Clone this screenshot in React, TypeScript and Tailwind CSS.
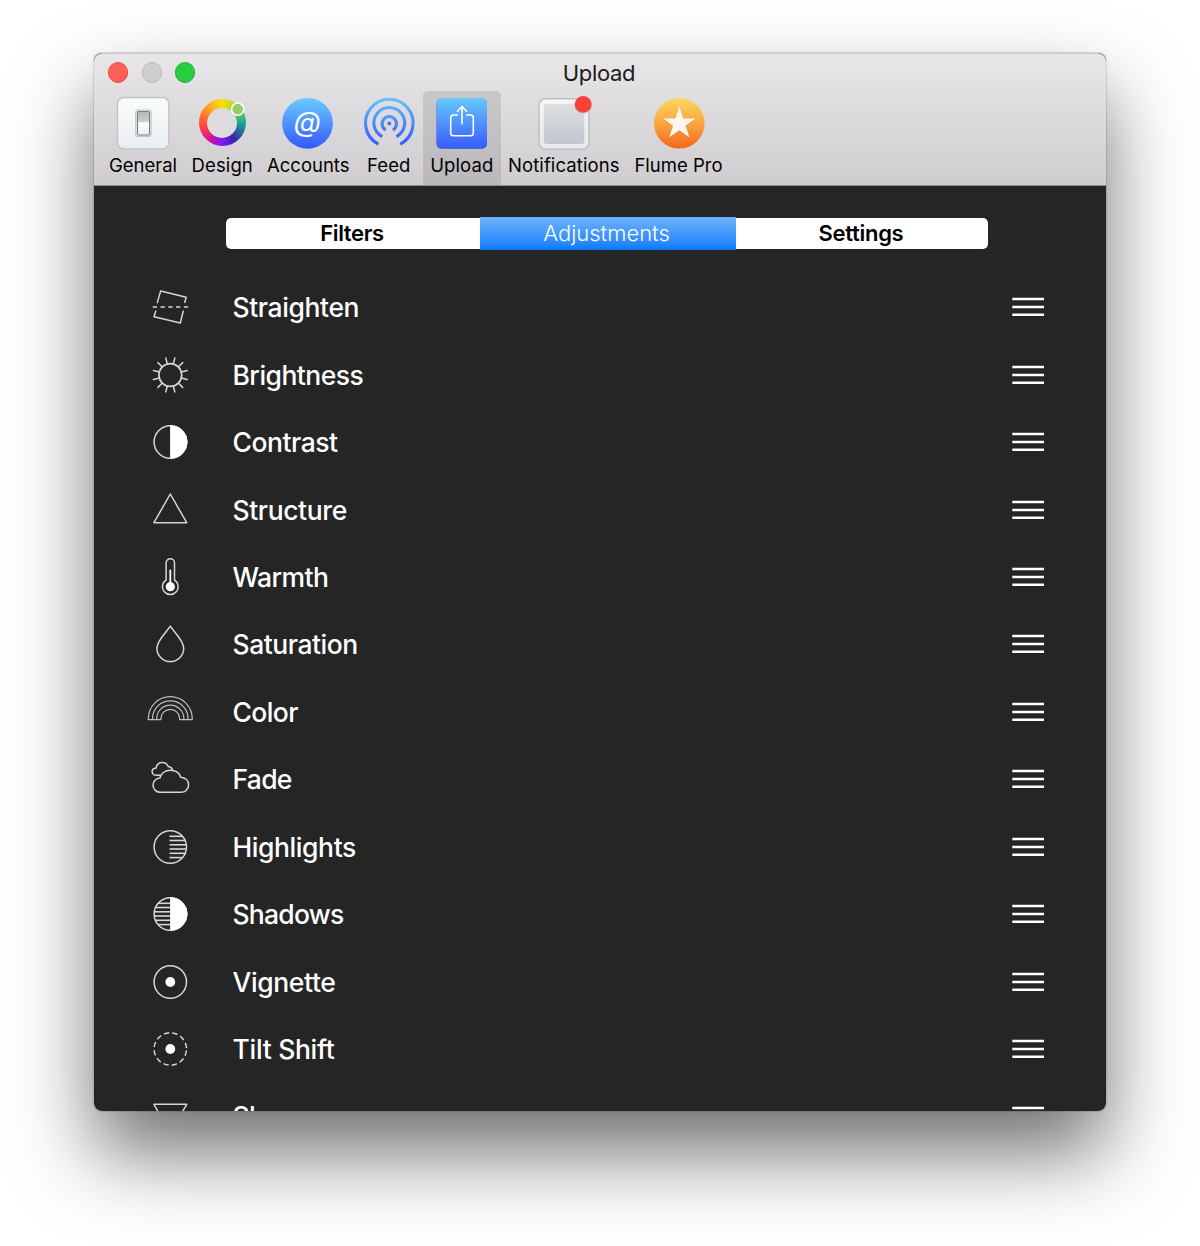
import type { ReactNode } from "react";

const line = { fill: "none", stroke: "#d6d6d6", strokeWidth: 1.5, strokeLinecap: "round", strokeLinejoin: "round" } as const;

const stripes = [13.3, 17.5, 21.8, 26, 30.3, 34.6];

function chord(y: number) {
  return Math.sqrt(16.4 * 16.4 - (y - 24) * (y - 24));
}

const adjustments: { name: string; label: string; art: ReactNode }[] = [
  {
    name: "Straighten",
    label: "tracking-[-0.4px]",
    art: (
      <>
        <path d="M11.3 19.6 14.7 7.9 40.2 14.3 38.8 19.3M9.7 28.3 8 33.8 34.3 40 37.2 28.3" />
        <path d="M6.7 24H42.3" strokeDasharray="4.3 3.5" strokeLinecap="butt" strokeWidth="1.7" />
      </>
    ),
  },
  {
    name: "Brightness",
    label: "tracking-[-0.55px]",
    art: (
      <>
        <circle cx="24.3" cy="24" r="11.4" strokeWidth="1.7" />
        {[15, 45, 75, 105, 135, 165, 195, 225, 255, 285, 315, 345].map((a) => (
          <path key={a} d="M35.7 24H41.8" transform={`rotate(${a} 24.3 24)`} />
        ))}
      </>
    ),
  },
  {
    name: "Contrast",
    label: "tracking-[-0.48px]",
    art: (
      <>
        <circle cx="24.3" cy="24" r="16.2" />
        <path d="M25 7.8a16.2 16.2 0 0 1 0 32.4Z" fill="#fff" stroke="#fff" strokeWidth="1" />
      </>
    ),
  },
  { name: "Structure", label: "tracking-[-0.4px]", art: <path d="M24.3 8 40.7 36.7H7.9Z" /> },
  {
    name: "Warmth",
    label: "tracking-[-0.6px]",
    art: (
      <>
        <path d="M20.1 27V10a4.2 4.2 0 0 1 8.4 0V27a7.9 7.9 0 1 1-8.4 0Z" />
        <path d="M24.3 17.5V33" stroke="#fff" strokeWidth="1.8" />
        <circle cx="24.3" cy="33.7" r="4.6" fill="#fff" stroke="none" />
      </>
    ),
  },
  {
    name: "Saturation",
    label: "tracking-[-0.47px]",
    art: <path d="M24.3 6.2C21 11.5 10.9 20.3 10.9 28.2a13.4 13.4 0 0 0 26.8 0C37.7 20.3 27.6 11.5 24.3 6.2Z" />,
  },
  {
    name: "Color",
    label: "tracking-[-0.6px]",
    art: (
      <g strokeWidth="1.2" stroke="#bdbdbd">
        {[22, 17.8, 13.6, 9.4].map((r) => (
          <path key={r} d={`M${24.3 - r} 31.2V30.7a${r} ${r} 0 0 1 ${2 * r} 0V31.2`} />
        ))}
        <path d="M2.3 31.7H14.9M33.7 31.7H46.3" />
      </g>
    ),
  },
  {
    name: "Fade",
    label: "tracking-[-0.7px]",
    art: (
      <>
        <path d="M14.4 37.3a7.2 7.2 0 0 1-.4-14.4C14.6 18.6 19 15.3 24.3 15.3c5 0 8.900 2.6 10.4 6.9 4.7.4 7.9 3.4 7.9 7.6 0 4.3-3.3 7.5-7.6 7.500Z" />
        <path d="M13.8 20.3H10.4c-2.600 0-4.300-1.600-4.300-3.700 0-2.200 1.600-3.500 4-3.700 .6-3.200 3-5.400 6.200-5.400 3.100 0 5 1.600 5.900 4.100 2 .1 3.500 1.200 4.200 3" />
      </>
    ),
  },
  {
    name: "Highlights",
    label: "tracking-[-0.42px]",
    art: (
      <>
        <circle cx="24.3" cy="24" r="16.2" />
        {stripes.map((y) => (
          <path key={y} d={`M23.5 ${y}H${24.3 + chord(y)}`} strokeLinecap="butt" strokeWidth="1.6" />
        ))}
      </>
    ),
  },
  {
    name: "Shadows",
    label: "tracking-[-0.75px]",
    art: (
      <>
        <circle cx="24.3" cy="24" r="16.2" />
        {stripes.map((y) => (
          <path key={y} d={`M${24.3 - chord(y)} ${y}H24.3`} strokeLinecap="butt" strokeWidth="1.6" />
        ))}
        <path d="M25 7.8a16.2 16.2 0 0 1 0 32.4Z" fill="#fff" stroke="#fff" strokeWidth="1" />
      </>
    ),
  },
  {
    name: "Vignette",
    label: "tracking-[-0.38px]",
    art: (
      <>
        <circle cx="24.3" cy="24" r="16.2" />
        <circle cx="24.3" cy="24" r="4.9" fill="#fff" stroke="none" />
      </>
    ),
  },
  {
    name: "Tilt Shift",
    label: "tracking-[-0.3px]",
    art: (
      <>
        <circle cx="24.3" cy="24" r="16.2" strokeDasharray="5.3 3.18" strokeDashoffset="-1.6" strokeLinecap="butt" />
        <circle cx="24.3" cy="24" r="4.9" fill="#fff" stroke="none" />
      </>
    ),
  },
  { name: "Sharpen", label: "tracking-[-0.5px]", art: <path d="M7.9 12.3H40.7L24.3 41Z" /> },
];

function GeneralIcon() {
  return (
    <>
      <defs>
        <linearGradient id="plate" x2="0" y2="1">
          <stop stopColor="#f9fcfc" />
          <stop offset="1" stopColor="#e9eef1" />
        </linearGradient>
        <linearGradient id="rocker" x2="0" y2="1">
          <stop stopColor="#b4b5b6" />
          <stop offset=".46" stopColor="#cfd1d1" />
          <stop offset=".47" stopColor="#fcfcfc" />
          <stop offset="1" stopColor="#eceeef" />
        </linearGradient>
      </defs>
      <rect x="2.4" y="1.500" width="51.500" height="51.500" rx="6.500" fill="url(#plate)" stroke="#c4c4c6" strokeWidth="1.500" />
      <rect x="20.7" y="14" width="15.500" height="26.500" rx="2" fill="#dfe2e3" stroke="#c2c5c7" />
      <rect x="22.500" y="15.500" width="12" height="23.500" rx=".8" fill="url(#rocker)" stroke="#6f7173" strokeWidth=".9" />
    </>
  );
}

function AccountsIcon() {
  return (
    <>
      <defs>
        <linearGradient id="sky" x2="0" y2="1">
          <stop stopColor="#6bcbff" />
          <stop offset="1" stopColor="#3358fd" />
        </linearGradient>
      </defs>
      <circle cx="27.5" cy="27.3" r="25.4" fill="url(#sky)" />
      <text x="27.3" y="35.5" textAnchor="middle" fontSize="28" fontStyle="italic" fontFamily="Inter, sans-serif" fontWeight="400" fill="#fff">@</text>
    </>
  );
}

function FeedIcon() {
  return (
    <>
      <defs>
        <linearGradient id="wave" gradientUnits="userSpaceOnUse" x1="0" y1="2" x2="0" y2="50">
          <stop stopColor="#65c5fd" />
          <stop offset="1" stopColor="#3154fb" />
        </linearGradient>
      </defs>
      <g transform="translate(-1 0)">
        <g fill="none" stroke="url(#wave)" strokeWidth="3.1">
          <path d="M17.3 48.2A23.8 23.8 0 1 1 39.3 48.2" />
          <path d="M21.2 40.6A15.4 15.4 0 1 1 35.4 40.6" />
          <path d="M24.7 34A7.2 7.2 0 1 1 31.9 34" />
        </g>
        <circle cx="28.3" cy="27.5" r="2" fill="#4579fc" />
      </g>
    </>
  );
}

function UploadIcon() {
  return (
    <>
      <defs>
        <linearGradient id="tile" x2="0" y2="1">
          <stop stopColor="#67c8ff" />
          <stop offset="1" stopColor="#385cfe" />
        </linearGradient>
      </defs>
      <rect x="2.6" y="2.4" width="50.4" height="50.4" rx="5" fill="#2451d1" />
      <rect x="2.6" y="2" width="50.4" height="50" rx="5" fill="url(#tile)" />
      <path d="M24 19H19.500a2.800 2.800 0 0 0-2.800 2.800V37a2.800 2.800 0 0 0 2.800 2.800H36.500A2.800 2.800 0 0 0 39.300 37V21.800A2.800 2.800 0 0 0 36.500 19H32M28 28.500V10.800M23 15.700 28 10.500 33 15.700" fill="none" stroke="#fff" strokeWidth="1.6" strokeLinejoin="round" />
    </>
  );
}

function NotificationsIcon() {
  return (
    <>
      <defs>
        <linearGradient id="screen" x2="0" y2="1">
          <stop stopColor="#dedfe0" />
          <stop offset="1" stopColor="#c1c5ce" />
        </linearGradient>
        <linearGradient id="frame" x2="0" y2="1">
          <stop stopColor="#f6f6f6" />
          <stop offset="1" stopColor="#e5e8ec" />
        </linearGradient>
      </defs>
      <rect x="3" y="2.7" width="50" height="50.5" rx="6.5" fill="url(#frame)" stroke="#bfbfc1" strokeWidth="1.5" />
      <rect x="7.8" y="8" width="40.5" height="40" rx="3" fill="url(#screen)" />
      <circle cx="47.2" cy="8.8" r="8.7" fill="#b9a9aa" opacity=".5" />
      <circle cx="47.2" cy="8.4" r="8.4" fill="#fa423d" />
    </>
  );
}

function ProIcon() {
  return (
    <>
      <defs>
        <linearGradient id="sun" x2="0" y2="1">
          <stop stopColor="#fbd85f" />
          <stop offset=".5" stopColor="#f9a63e" />
          <stop offset="1" stopColor="#f9651b" />
        </linearGradient>
      </defs>
      <circle cx="28.3" cy="27.3" r="25.3" fill="url(#sun)" />
      <path d="M28.3 10.3 32.2 22.4H44.8L34.6 29.8 38.5 41.6 28.3 34.3 18.1 41.6 22 29.8 11.8 22.4H24.4Z" fill="#d86a1b" opacity=".45" transform="translate(0 .8)" />
      <path d="M28.3 10.3 32.2 22.4H44.8L34.6 29.8 38.5 41.6 28.3 34.3 18.1 41.6 22 29.8 11.8 22.4H24.4Z" fill="#fdf6ee" />
    </>
  );
}

function DesignIcon() {
  return (
    <div className="relative mt-[3.4px] size-[47px] rounded-full bg-[conic-gradient(#f7e400,#a8cf3d_40deg,#20b58d_85deg,#246f9c_115deg,#3a22a8_145deg,#8018fa_180deg,#c511a8_210deg,#fb3a46_250deg,#ff6a32_285deg,#fda81f_320deg,#f7e400)]">
      <div className="absolute inset-[8.5px] rounded-full bg-[#dddbdd]" />
      <svg viewBox="0 0 16 16" className="absolute right-0 top-[2px] size-[16px] overflow-visible">
        <circle cx="7.7" cy="8.2" r="6.1" fill="#96cd69" stroke="#fff" strokeWidth="1.5" />
      </svg>
    </div>
  );
}

const tabs = [
  { name: "General", cell: "w-[82px]", text: "tracking-[0px]", icon: <GeneralIcon /> },
  { name: "Design", cell: "w-[76.5px]", text: "tracking-[0.1px]", icon: null },
  { name: "Accounts", cell: "w-[95.5px]", text: "tracking-[0px]", icon: <AccountsIcon /> },
  { name: "Feed", cell: "w-[67px]", text: "tracking-[0.1px] pr-[1.5px]", icon: <FeedIcon /> },
  { name: "Upload", cell: "w-[77.5px] rounded-t-[5px] bg-linear-to-b from-[#c9c7c9] to-[#bab8ba]", text: "tracking-[0.1px]", icon: <UploadIcon /> },
  { name: "Notifications", cell: "w-[126.5px]", text: "tracking-[0.1px]", icon: <NotificationsIcon /> },
  { name: "Flume Pro", cell: "w-[103px]", text: "tracking-[0px]", icon: <ProIcon /> },
];

export default function App() {
  return (
    <div className="h-[1246px] w-[1200px] overflow-hidden bg-white pl-[94px] pt-[53px] font-['Inter',sans-serif]">
      <div className="h-[1058px] w-[1012px] rounded-[8px] shadow-[0_42px_80px_rgba(0,0,0,0.56),0_0_2px_rgba(0,0,0,0.4)]">
        <div className="flex h-full flex-col overflow-hidden rounded-[8px] bg-[#252525]">
          <header className="h-[132.5px] shrink-0 rounded-t-[8px] border-b border-t border-b-[#8f8e90] border-t-[#c9c8c9] bg-linear-to-b from-[#e8e6e8] to-[#d0cdd0]">
            <div className="grid h-[37px] grid-cols-3 items-center px-[14px]">
              <div className="flex gap-[13.3px]">
                <span className="size-[20.3px] rounded-full border border-[#e2504a] bg-[#ff5f58]" />
                <span className="size-[20.3px] rounded-full border border-[#b9b8b9] bg-[#cfcecf]" />
                <span className="size-[20.3px] rounded-full border border-[#25ad35] bg-[#28cc40]" />
              </div>
              <h1 className="pr-[2px] pt-[2px] text-center text-[22px] leading-[35px] tracking-[-0.3px] text-[#1c1c1c]">Upload</h1>
            </div>
            <nav className="flex h-[93.5px] pl-[8px]">
              {tabs.map((t) => (
                <button key={t.name} className={`flex shrink-0 flex-col items-center pt-[5px] ${t.cell}`}>
                  {t.icon ? (
                    <svg viewBox="0 0 56 56" className="h-[56px] w-[56px] shrink-0 overflow-visible">{t.icon}</svg>
                  ) : (
                    <div className="flex h-[56px] w-[56px] shrink-0 justify-center"><DesignIcon /></div>
                  )}
                  <span className={`whitespace-nowrap text-[18.5px] leading-[26px] text-black ${t.text}`}>{t.name}</span>
                </button>
              ))}
            </nav>
          </header>
          <main className="flex min-h-0 flex-1 flex-col overflow-hidden">
            <div className="ml-[132px] mt-[31.5px] flex h-[33px] w-[762px] shrink-0 overflow-hidden rounded-[5px] text-[22px] leading-[33px]">
              <button className="my-px w-[254px] rounded-l-[5px] bg-white pr-[2px] font-semibold leading-[31px] tracking-[-0.35px] text-black">Filters</button>
              <button className="w-[256px] bg-linear-to-b from-[#6cb3fa] to-[#067aff] pr-[3px] font-light tracking-[0px] text-white">Adjustments</button>
              <button className="my-px flex-1 rounded-r-[5px] bg-white pr-[2px] font-semibold leading-[31px] tracking-[-0.3px] text-black">Settings</button>
            </div>
            <ul className="mt-[23.6px]">
              {adjustments.map((a) => (
                <li key={a.name} className="flex h-[67.43px] items-center pl-[52px] pr-[61px]">
                  <svg viewBox="0 0 48 48" className="h-[48px] w-[48px] shrink-0" {...line}>{a.art}</svg>
                  <span className={`ml-[38.5px] flex-1 whitespace-nowrap text-[26.5px] font-medium leading-[34px] text-white ${a.label}`}>{a.name}</span>
                  <svg viewBox="0 0 33 20" className="h-[20px] w-[33px] shrink-0" stroke="#fff" strokeWidth="2.5">
                    <path d="M.3 2H32M.3 10H32M.3 17.8H32" />
                  </svg>
                </li>
              ))}
            </ul>
          </main>
        </div>
      </div>
    </div>
  );
}
